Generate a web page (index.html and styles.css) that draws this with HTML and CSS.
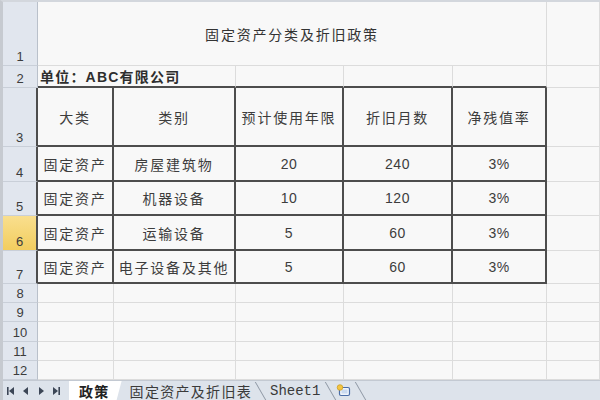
FILE: index.html
```html
<!DOCTYPE html>
<html lang="zh-CN">
<head>
<meta charset="utf-8">
<title>固定资产分类及折旧政策</title>
<link rel="stylesheet" href="styles.css">
</head>
<body>
<div class="sheet">
  <div class="grid">
    <div class="rh">1</div>
    <div class="c title span5">固定资产分类及折旧政策</div>
    <div class="c"></div>

    <div class="rh">2</div>
    <div class="c unit span2 tb">单位：ABC有限公司</div>
    <div class="c tb"></div>
    <div class="c tb"></div>
    <div class="c tb"></div>
    <div class="c"></div>

    <div class="rh tl">3</div>
    <div class="c t">大类</div>
    <div class="c t">类别</div>
    <div class="c t">预计使用年限</div>
    <div class="c t">折旧月数</div>
    <div class="c t">净残值率</div>
    <div class="c"></div>

    <div class="rh tl">4</div>
    <div class="c t">固定资产</div>
    <div class="c t">房屋建筑物</div>
    <div class="c t n">20</div>
    <div class="c t n">240</div>
    <div class="c t n">3%</div>
    <div class="c"></div>

    <div class="rh tl">5</div>
    <div class="c t">固定资产</div>
    <div class="c t">机器设备</div>
    <div class="c t n">10</div>
    <div class="c t n">120</div>
    <div class="c t n">3%</div>
    <div class="c"></div>

    <div class="rh tl sel">6</div>
    <div class="c t">固定资产</div>
    <div class="c t">运输设备</div>
    <div class="c t n">5</div>
    <div class="c t n">60</div>
    <div class="c t n">3%</div>
    <div class="c"></div>

    <div class="rh tl">7</div>
    <div class="c t">固定资产</div>
    <div class="c t">电子设备及其他</div>
    <div class="c t n">5</div>
    <div class="c t n">60</div>
    <div class="c t n">3%</div>
    <div class="c"></div>

    <div class="rh">8</div>
    <div class="c"></div><div class="c"></div><div class="c"></div><div class="c"></div><div class="c"></div><div class="c"></div>
    <div class="rh">9</div>
    <div class="c"></div><div class="c"></div><div class="c"></div><div class="c"></div><div class="c"></div><div class="c"></div>
    <div class="rh">10</div>
    <div class="c"></div><div class="c"></div><div class="c"></div><div class="c"></div><div class="c"></div><div class="c"></div>
    <div class="rh">11</div>
    <div class="c"></div><div class="c"></div><div class="c"></div><div class="c"></div><div class="c"></div><div class="c"></div>
    <div class="rh">12</div>
    <div class="c"></div><div class="c"></div><div class="c"></div><div class="c"></div><div class="c"></div><div class="c"></div>
  </div>

  <div class="tabbar">
    <div class="nav">
      <svg width="8" height="8" viewBox="0 0 8 8"><rect x="0" y="0" width="1.6" height="8" fill="#3c4656"/><path d="M7 0 L2 4 L7 8 Z" fill="#3c4656"/></svg>
      <svg width="8" height="8" viewBox="0 0 8 8"><path d="M6 0 L1 4 L6 8 Z" fill="#3c4656"/></svg>
      <svg width="8" height="8" viewBox="0 0 8 8"><path d="M2 0 L7 4 L2 8 Z" fill="#3c4656"/></svg>
      <svg width="8" height="8" viewBox="0 0 8 8"><path d="M1 0 L6 4 L1 8 Z" fill="#3c4656"/><rect x="6.4" y="0" width="1.6" height="8" fill="#3c4656"/></svg>
    </div>
    <div class="tab active">政策</div>
    <div class="tab">固定资产及折旧表</div>
    <div class="tab mono">Sheet1</div>
    <div class="tab newtab">
      <svg width="16" height="13" viewBox="0 0 16 13">
        <rect x="3.5" y="3.5" width="10" height="8" rx="1.5" fill="#eef3fb" stroke="#4a6da8" stroke-width="1.2"/>
        <rect x="5.5" y="5.5" width="6" height="4" fill="#c9d9f0"/>
        <circle cx="4" cy="3.5" r="2.8" fill="#f4c542" stroke="#c99a1c" stroke-width="0.7"/>
      </svg>
    </div>
  </div>
</div>
</body>
</html>
```

FILE: styles.css
```css
* { box-sizing: border-box; }
html, body { margin: 0; padding: 0; }
body {
  width: 600px;
  height: 400px;
  overflow: hidden;
  background: #f8f8f8;
  font-family: "Liberation Sans", "Noto Sans CJK SC", sans-serif;
  color: #3d3d3d;
}
.sheet {
  width: 600px;
  height: 400px;
  display: flex;
  flex-direction: column;
  border-top: 2px solid #d3d7dd;
  border-left: 3px solid #c6cad0;
}
.grid {
  display: grid;
  grid-template-columns: 35px 76px 122px 108px 109px 94px 1fr;
  grid-template-rows: 64px 22px 59px 35px 34px 35px 33px 19px 19px 20px 19px 19px;
}
.rh {
  background: #e1e6ee;
  border-right: 1px solid #b9c0ca;
  border-bottom: 1px solid #c9cfd8;
  display: flex;
  align-items: flex-end;
  justify-content: center;
  padding-bottom: 1px;
  font-size: 13px;
  line-height: 15px;
  color: #3c3c3c;
}
.rh.tl { border-right: 2px solid #4d4d4d; }
.rh.sel {
  background: linear-gradient(#f9df8e, #f2cd5f);
  color: #3c3c3c;
}
.c {
  background: #f8f8f8;
  border-right: 1px solid #dcdcdc;
  border-bottom: 1px solid #dcdcdc;
  display: flex;
  align-items: center;
  justify-content: center;
  font-size: 14px;
  letter-spacing: 1.8px;
  white-space: nowrap;
}
.span5 { grid-column: span 5; }
.span2 { grid-column: span 2; }
.title { color: #333; padding-top: 1px; }
.unit {
  justify-content: flex-start;
  padding-left: 2px;
  font-weight: bold;
  color: #2e2e2e;
  letter-spacing: 1.2px;
}
.tb { border-bottom: 2px solid #4d4d4d; }
.t {
  border-right: 2px solid #4d4d4d;
  border-bottom: 2px solid #4d4d4d;
}
.n { letter-spacing: 0.5px; }

.tabbar {
  flex: 1;
  display: flex;
  align-items: stretch;
  background: #dde3eb;
  border-top: 1px solid #c3c9d2;
}
.nav {
  width: 66px;
  display: flex;
  align-items: center;
  gap: 7px;
  padding-left: 4px;
}
.tab {
  position: relative;
  display: flex;
  align-items: center;
  font-family: "Noto Sans CJK SC", sans-serif;
  font-size: 14px;
  letter-spacing: 1.3px;
  color: #3a3a3a;
  padding: 0 6px 0 8px;
  line-height: 1;
}
.tab::after {
  content: "";
  position: absolute;
  right: -3px;
  top: 1px;
  bottom: 0;
  width: 1px;
  background: #8d96a3;
  transform: skewX(30deg);
}
.tab.active {
  background: #ffffff;
  color: #222;
  font-weight: bold;
  padding: 0 12px 0 10px;
  clip-path: polygon(0 0, 100% 0, calc(100% - 5px) 100%, 0 100%);
}
.tab.active::after { display: none; }
.tab.mono {
  font-family: "Liberation Mono", monospace;
  font-size: 14px;
  letter-spacing: 0;
  padding: 0 8px 0 12px;
}
.tab.newtab { padding: 0 6px 0 8px; }
```
